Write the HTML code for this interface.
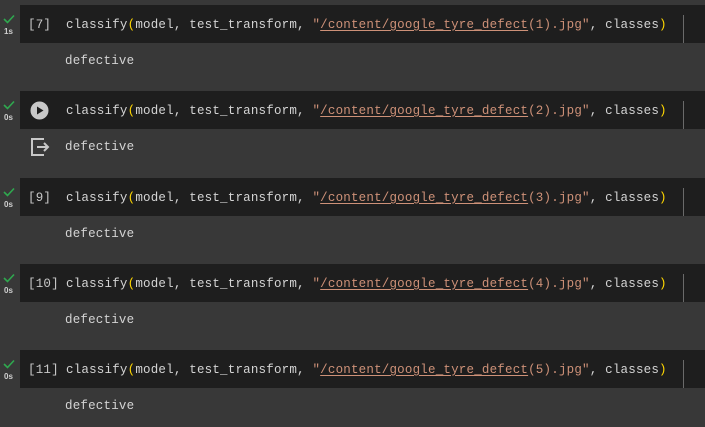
<!DOCTYPE html>
<html><head><style>
html,body{margin:0;padding:0;width:705px;height:427px;background:#383838;overflow:hidden;font-family:"Liberation Mono",monospace;}
.cell{position:absolute;left:20px;width:685px;height:38px;background:#1e1e1e;}
.bar{position:absolute;left:663px;top:10px;width:1px;height:28px;background:#6a6a6a;}
.code{position:absolute;left:46px;top:13px;font-size:12.5px;letter-spacing:0.2px;color:#d4d4d4;white-space:pre;line-height:15px;}
.num{position:absolute;left:8px;top:13px;font-size:12.5px;letter-spacing:0.2px;color:#c8c8c8;white-space:pre;line-height:15px;}
.p{color:#ffd700}.s{color:#ce9178}.u{text-decoration:underline;text-underline-offset:2px}
.out{position:absolute;left:65px;font-size:12.5px;letter-spacing:0.2px;color:#d4d4d4;}
.chk{position:absolute;left:3px;width:12px;height:10px;}
.t{position:absolute;left:4px;font-family:"Liberation Sans",sans-serif;font-size:8px;font-weight:bold;color:#cfcfcf;}
</style></head><body>
<div class="cell" style="top:5px"><div class="num">[7]</div><div class="code">classify<span class="p">(</span>model, test_transform, <span class="s">"<span class="u">/content/google_tyre_defect</span>(1).jpg"</span>, classes<span class="p">)</span></div><div class="bar"></div></div>
<div class="cell" style="top:91px"><svg style="position:absolute;left:10px;top:10px" width="19" height="19"><circle cx="9.5" cy="9.5" r="9" fill="#c8c8c8"/><path d="M7 5.5 L13.5 9.5 L7 13.5Z" fill="#1e1e1e"/></svg><div class="code">classify<span class="p">(</span>model, test_transform, <span class="s">"<span class="u">/content/google_tyre_defect</span>(2).jpg"</span>, classes<span class="p">)</span></div><div class="bar"></div></div>
<div class="cell" style="top:178px"><div class="num">[9]</div><div class="code">classify<span class="p">(</span>model, test_transform, <span class="s">"<span class="u">/content/google_tyre_defect</span>(3).jpg"</span>, classes<span class="p">)</span></div><div class="bar"></div></div>
<div class="cell" style="top:264px"><div class="num">[10]</div><div class="code">classify<span class="p">(</span>model, test_transform, <span class="s">"<span class="u">/content/google_tyre_defect</span>(4).jpg"</span>, classes<span class="p">)</span></div><div class="bar"></div></div>
<div class="cell" style="top:350px"><div class="num">[11]</div><div class="code">classify<span class="p">(</span>model, test_transform, <span class="s">"<span class="u">/content/google_tyre_defect</span>(5).jpg"</span>, classes<span class="p">)</span></div><div class="bar"></div></div>
<div class="out" style="top:54px">defective</div>
<div class="out" style="top:140px">defective</div>
<div class="out" style="top:227px">defective</div>
<div class="out" style="top:313px">defective</div>
<div class="out" style="top:399px">defective</div>
<svg style="position:absolute;left:30px;top:137px" width="20" height="20"><path d="M14 2 H2 V18 H14" fill="none" stroke="#c8c8c8" stroke-width="2"/><path d="M7 10 H18 M14 6 L18 10 L14 14" fill="none" stroke="#c8c8c8" stroke-width="2"/></svg>
<svg class="chk" style="top:14px" viewBox="0 0 12 10"><path d="M1 5 L4.5 8.5 L11 1.5" fill="none" stroke="#2fa84f" stroke-width="1.6"/></svg><div class="t" style="top:27px">1s</div>
<svg class="chk" style="top:100px" viewBox="0 0 12 10"><path d="M1 5 L4.5 8.5 L11 1.5" fill="none" stroke="#2fa84f" stroke-width="1.6"/></svg><div class="t" style="top:113px">0s</div>
<svg class="chk" style="top:187px" viewBox="0 0 12 10"><path d="M1 5 L4.5 8.5 L11 1.5" fill="none" stroke="#2fa84f" stroke-width="1.6"/></svg><div class="t" style="top:200px">0s</div>
<svg class="chk" style="top:273px" viewBox="0 0 12 10"><path d="M1 5 L4.5 8.5 L11 1.5" fill="none" stroke="#2fa84f" stroke-width="1.6"/></svg><div class="t" style="top:286px">0s</div>
<svg class="chk" style="top:359px" viewBox="0 0 12 10"><path d="M1 5 L4.5 8.5 L11 1.5" fill="none" stroke="#2fa84f" stroke-width="1.6"/></svg><div class="t" style="top:372px">0s</div>
</body></html>
